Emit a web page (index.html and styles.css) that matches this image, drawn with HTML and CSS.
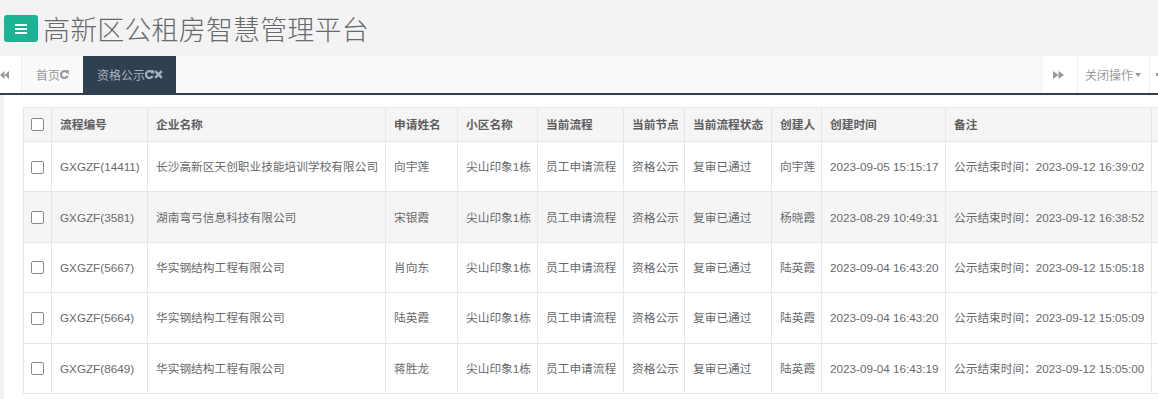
FILE: index.html
```html
<!DOCTYPE html>
<html lang="zh-CN">
<head>
<meta charset="utf-8">
<title>高新区公租房智慧管理平台</title>
<link rel="stylesheet" href="styles.css">
</head>
<body>
<header class="topbar">
  <a class="menu-btn" href="#">
    <svg width="12" height="10" viewBox="0 0 12 10"><rect x="0" y="0" width="12" height="2" fill="#fff"/><rect x="0" y="4" width="12" height="2" fill="#fff"/><rect x="0" y="8" width="12" height="2" fill="#fff"/></svg>
  </a>
  <h1 class="title">高新区公租房智慧管理平台</h1>
</header>

<nav class="tabs">
  <div class="roll roll-left">
    <svg width="9" height="8" viewBox="0 0 9 8"><polygon points="4.5,0 0,4 4.5,8" fill="#999"/><polygon points="9,0 4.5,4 9,8" fill="#999"/></svg>
  </div>
  <div class="tab-list">
    <a class="tab" href="#">首页<svg class="ico" width="9" height="9" viewBox="0 0 10 10"><path d="M8.2 3.2 A3.8 3.8 0 1 0 8.4 6.6" fill="none" stroke="currentColor" stroke-width="2.4"/><polygon points="5.4,0.4 9.9,0.4 9.9,4.9" fill="currentColor"/></svg></a>
    <a class="tab active" href="#">资格公示<svg class="ico" width="9" height="9" viewBox="0 0 10 10"><path d="M8.2 3.2 A3.8 3.8 0 1 0 8.4 6.6" fill="none" stroke="currentColor" stroke-width="2.4"/><polygon points="5.4,0.4 9.9,0.4 9.9,4.9" fill="currentColor"/></svg><svg class="ico close" width="9" height="9" viewBox="0 0 9 9"><path d="M1.2 1.2 L7.8 7.8 M7.8 1.2 L1.2 7.8" stroke="currentColor" stroke-width="2.4"/></svg></a>
  </div>
  <div class="roll roll-right">
    <svg width="11" height="8" viewBox="0 0 11 8"><polygon points="0,0 5.5,4 0,8" fill="#999"/><polygon points="5.5,0 11,4 5.5,8" fill="#999"/></svg>
  </div>
  <div class="tab-ops">关闭操作<span class="caret"></span></div>
  <div class="tab-more"><span class="dot"></span></div>
</nav>

<main class="content">
  <table class="grid">
    <colgroup>
      <col style="width:28px"><col style="width:96px"><col style="width:238px"><col style="width:72px"><col style="width:80px"><col style="width:86px"><col style="width:61px"><col style="width:87px"><col style="width:50px"><col style="width:124px"><col style="width:206px"><col style="width:7px">
    </colgroup>
    <thead>
      <tr>
        <th class="chk"><input type="checkbox"></th>
        <th>流程编号</th><th>企业名称</th><th>申请姓名</th><th>小区名称</th><th>当前流程</th><th>当前节点</th><th>当前流程状态</th><th>创建人</th><th>创建时间</th><th>备注</th><th class="edge"></th>
      </tr>
    </thead>
    <tbody>
      <tr>
        <td class="chk"><input type="checkbox"></td>
        <td>GXGZF(14411)</td><td>长沙高新区天创职业技能培训学校有限公司</td><td>向宇莲</td><td>尖山印象1栋</td><td>员工申请流程</td><td>资格公示</td><td>复审已通过</td><td>向宇莲</td><td>2023-09-05 15:15:17</td><td>公示结束时间：2023-09-12 16:39:02</td><td class="edge"></td>
      </tr>
      <tr class="hover">
        <td class="chk"><input type="checkbox"></td>
        <td>GXGZF(3581)</td><td>湖南弯弓信息科技有限公司</td><td>宋银霞</td><td>尖山印象1栋</td><td>员工申请流程</td><td>资格公示</td><td>复审已通过</td><td>杨晓霞</td><td>2023-08-29 10:49:31</td><td>公示结束时间：2023-09-12 16:38:52</td><td class="edge"></td>
      </tr>
      <tr>
        <td class="chk"><input type="checkbox"></td>
        <td>GXGZF(5667)</td><td>华实钢结构工程有限公司</td><td>肖向东</td><td>尖山印象1栋</td><td>员工申请流程</td><td>资格公示</td><td>复审已通过</td><td>陆英霞</td><td>2023-09-04 16:43:20</td><td>公示结束时间：2023-09-12 15:05:18</td><td class="edge"></td>
      </tr>
      <tr>
        <td class="chk"><input type="checkbox"></td>
        <td>GXGZF(5664)</td><td>华实钢结构工程有限公司</td><td>陆英霞</td><td>尖山印象1栋</td><td>员工申请流程</td><td>资格公示</td><td>复审已通过</td><td>陆英霞</td><td>2023-09-04 16:43:20</td><td>公示结束时间：2023-09-12 15:05:09</td><td class="edge"></td>
      </tr>
      <tr>
        <td class="chk"><input type="checkbox"></td>
        <td>GXGZF(8649)</td><td>华实钢结构工程有限公司</td><td>蒋胜龙</td><td>尖山印象1栋</td><td>员工申请流程</td><td>资格公示</td><td>复审已通过</td><td>陆英霞</td><td>2023-09-04 16:43:19</td><td>公示结束时间：2023-09-12 15:05:00</td><td class="edge"></td>
      </tr>
    </tbody>
  </table>
</main>
</body>
</html>
```

FILE: styles.css
```css
html, body {
  margin: 0;
  padding: 0;
  overflow: hidden;
  background: #fff;
  font-family: "Liberation Sans", "Noto Sans CJK SC", sans-serif;
  font-size: 12px;
  color: #676a6c;
}

.topbar {
  height: 56px;
  background: #f3f3f4;
  display: flex;
  align-items: center;
}

.menu-btn {
  margin-left: 4px;
  margin-top: 1px;
  width: 34px;
  height: 27px;
  background: #1ab394;
  border-radius: 3px;
  display: flex;
  align-items: center;
  justify-content: center;
}

.title {
  margin: 0 0 0 5px;
  font-family: "Noto Sans CJK SC", sans-serif;
  font-size: 27px;
  font-weight: 300;
  color: #676a6c;
  line-height: 1;
  letter-spacing: 0.15px;
}

.tabs {
  height: 37px;
  background: #fafafa;
  border-bottom: 2px solid #2f4050;
  display: flex;
  align-items: stretch;
}

.roll {
  background: #fff;
  display: flex;
  align-items: center;
}

.roll-left {
  width: 21px;
  border-right: 1px solid #eee;
}

.tab-list {
  flex: 1;
  display: flex;
}

.tab {
  display: flex;
  align-items: center;
  padding: 0 14px 0 14px;
  color: #999;
  text-decoration: none;
}

.tab.active {
  background: #2f4050;
  color: #a7b1c2;
  padding: 0 13px 0 14px;
}

.roll-right {
  width: 36px;
  box-sizing: border-box;
  border-left: 1px solid #eee;
  padding-left: 11px;
}

.tab-ops {
  width: 72px;
  border-left: 1px solid #eee;
  background: #fff;
  display: flex;
  align-items: center;
  padding-left: 7px;
  box-sizing: border-box;
  color: #999;
}

.caret {
  margin-left: 2px;
  width: 0;
  height: 0;
  border-left: 3.5px solid transparent;
  border-right: 3.5px solid transparent;
  border-top: 4px solid #999;
}

.tab-more {
  width: 9px;
  box-sizing: border-box;
  border-left: 1px solid #eee;
  background: #fff;
  display: flex;
  align-items: center;
  padding-left: 6px;
}

.dot {
  width: 3px;
  height: 3px;
  background: #999;
}

.content {
  border-left: 4px solid #f3f3f4;
  padding: 12px 0 0 19px;
  height: 400px;
}

.grid {
  border-collapse: collapse;
  table-layout: fixed;
  width: 1135px;
  border-top: 1px solid #dedede;
  font-size: 11.7px;
}

.grid th,
.grid td {
  border: 1px solid #e7e7e7;
  padding: 8px;
  line-height: 17px;
  text-align: left;
  vertical-align: middle;
  white-space: nowrap;
  overflow: hidden;
}

.grid th {
  background: #f5f5f5;
  font-weight: bold;
  color: #5e5e5e;
  height: 16.5px;
}

.grid td {
  height: 33.4px;
}

.grid .chk,
.grid .edge {
  padding: 0;
  text-align: center;
}

.grid input[type="checkbox"] {
  appearance: none;
  -webkit-appearance: none;
  box-sizing: border-box;
  margin: 0;
  width: 13px;
  height: 13px;
  border: 1px solid #8a8a8a;
  border-radius: 2px;
  background: #fff;
  vertical-align: middle;
  position: relative;
  top: -1px;
}

.grid tr.hover td {
  background: #f5f5f5;
}
```
